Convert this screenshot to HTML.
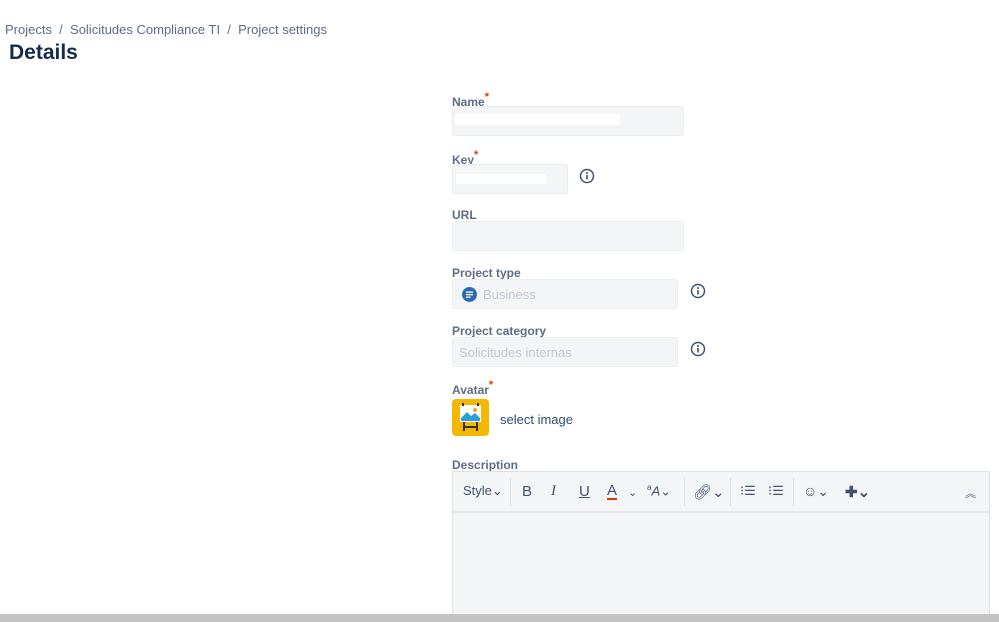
<!DOCTYPE html>
<html><head><meta charset="utf-8"><style>
*{margin:0;padding:0;box-sizing:border-box}
body{width:999px;height:622px;background:#fff;position:relative;overflow:hidden;font-family:"Liberation Sans",sans-serif;color:#42526e}
.a{position:absolute}
.lbl{position:absolute;left:452px;font-size:12px;font-weight:bold;color:#5e6c84}
.lbl sup{color:#de350b;font-size:11px;position:relative;top:-1px}
.inp{position:absolute;left:452px;height:30px;background:#f4f5f7;border:1px solid #ebecf0;border-radius:3px}
.info{position:absolute;width:16px;height:16px}
.tb{position:absolute;top:483px;font-size:15px;color:#42526e}
.sep{position:absolute;top:478px;width:1px;height:28px;background:#dfe1e6}
</style></head><body>
<div class="a" style="left:5px;top:22px;font-size:13px;color:#5e6c84">Projects &nbsp;/&nbsp; Solicitudes Compliance TI &nbsp;/&nbsp; Project settings</div>
<div class="a" style="left:9px;top:41px;font-size:21px;font-weight:bold;color:#172b4d">Details</div>

<div class="lbl" style="top:92px">Name<sup>*</sup></div>
<div class="inp" style="top:106px;width:232px"><div class="a" style="left:2px;top:7px;width:165px;height:11px;background:#fff"></div></div>
<div class="lbl" style="top:150px">Key<sup>*</sup></div>
<div class="inp" style="top:164px;width:116px"><div class="a" style="left:3px;top:9px;width:90px;height:10px;background:#fff"></div></div>
<svg class="info" style="left:579px;top:168px" viewBox="0 0 16 16"><circle cx="8" cy="8" r="6.5" fill="none" stroke="#42526e" stroke-width="1.5"/><rect x="7.2" y="7" width="1.6" height="4.5" fill="#42526e"/><circle cx="8" cy="5" r="1" fill="#42526e"/></svg>
<div class="lbl" style="top:208px">URL</div>
<div class="inp" style="top:221px;width:232px"></div>
<div class="lbl" style="top:266px">Project type</div>
<div class="inp" style="top:279px;width:226px"><svg class="a" style="left:9px;top:7px" width="15" height="15" viewBox="0 0 15 15"><circle cx="7.5" cy="7.5" r="7.5" fill="#2d6ab4"/><rect x="4" y="4.5" width="7" height="1.3" fill="#fff"/><rect x="4" y="7" width="7" height="1.3" fill="#fff"/><rect x="4" y="9.5" width="4.5" height="1.3" fill="#fff"/></svg><span class="a" style="left:30px;top:7px;font-size:13px;color:#c1c7d0">Business</span></div>
<svg class="info" style="left:690px;top:283px" viewBox="0 0 16 16"><circle cx="8" cy="8" r="6.5" fill="none" stroke="#42526e" stroke-width="1.5"/><rect x="7.2" y="7" width="1.6" height="4.5" fill="#42526e"/><circle cx="8" cy="5" r="1" fill="#42526e"/></svg>
<div class="lbl" style="top:324px">Project category</div>
<div class="inp" style="top:337px;width:226px"><span class="a" style="left:6px;top:7px;font-size:13px;color:#c1c7d0">Solicitudes internas</span></div>
<svg class="info" style="left:690px;top:341px" viewBox="0 0 16 16"><circle cx="8" cy="8" r="6.5" fill="none" stroke="#42526e" stroke-width="1.5"/><rect x="7.2" y="7" width="1.6" height="4.5" fill="#42526e"/><circle cx="8" cy="5" r="1" fill="#42526e"/></svg>
<div class="lbl" style="top:380px">Avatar<sup>*</sup></div>
<svg class="a" style="left:452px;top:399px" width="37" height="37" viewBox="0 0 37 37"><rect width="37" height="37" rx="4" fill="#f5b800"/><rect x="8" y="6" width="21" height="17" fill="#fff"/><rect x="10" y="4" width="2" height="3" fill="#333"/><rect x="25" y="4" width="2" height="3" fill="#333"/><path d="M9 19 L15 13 L19 17 L23 14 L28 19 V22 H9Z" fill="#2aa0d8"/><circle cx="23" cy="11" r="2" fill="#f5a623"/><rect x="11" y="23" width="2" height="9" fill="#333"/><rect x="24" y="23" width="2" height="9" fill="#333"/><rect x="11" y="27" width="15" height="2" fill="#333"/></svg>
<div class="a" style="left:500px;top:412px;font-size:13px;color:#2a4a7a">select image</div>
<div class="lbl" style="top:458px">Description</div>
<div class="a" style="left:452px;top:471px;width:538px;height:150px;border:1px solid #dfe1e6;background:#f4f5f7"></div>
<div class="a" style="left:453px;top:511px;width:536px;height:2px;background:#e4e6ea"></div>
<div class="tb" style="left:463px;font-size:13px">Style⌄</div>
<div class="sep" style="left:510px"></div>
<div class="tb" style="left:522px">B</div>
<div class="tb" style="left:551px;font-style:italic;font-family:'Liberation Serif',serif">I</div>
<div class="tb" style="left:579px;text-decoration:underline">U</div>
<div class="tb" style="left:607px;border-bottom:2px solid #de350b;line-height:15px">A</div>
<div class="tb" style="left:628px;font-size:11px;top:486px">⌄</div>
<div class="tb" style="left:647px;font-size:13px"><sup style="font-size:8px">a</sup><i>A</i>⌄</div>
<div class="sep" style="left:684px"></div>
<div class="tb" style="left:693px;font-size:15px">🔗︎⌄</div>
<div class="sep" style="left:730px"></div>
<div class="tb" style="left:740px;font-size:13px">⁝☰</div>
<div class="tb" style="left:768px;font-size:13px">⁝☰</div>
<div class="sep" style="left:793px"></div>
<div class="tb" style="left:803px;font-size:14px">☺⌄</div>
<div class="tb" style="left:845px;font-size:15px;font-weight:bold">✚⌄</div>
<div class="tb" style="left:965px;font-size:11px;top:485px">︽</div>
<div class="a" style="left:0;top:614px;width:999px;height:8px;background:#c3c3c3"></div>
</body></html>
